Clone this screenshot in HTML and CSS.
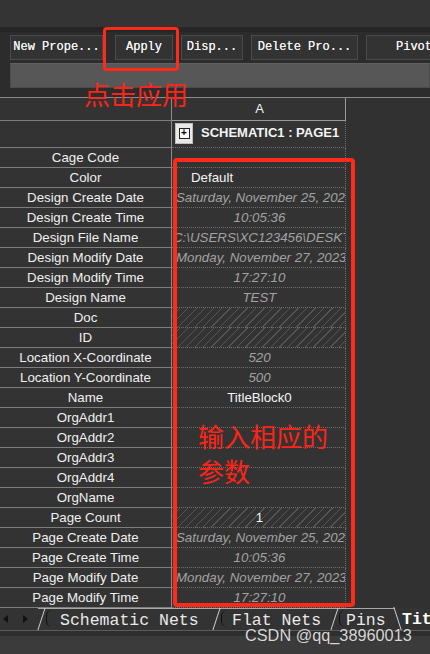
FILE: index.html
```html
<!DOCTYPE html>
<html lang="zh">
<head>
<meta charset="utf-8">
<title>Property Editor</title>
<link rel="stylesheet" href="styles.css">
</head>
<body>
<div class="screen">
  <div class="titlebar"></div>
  <div class="toolarea">
    <div class="toolbar">
      <div class="btn b-new">New Prope...</div>
      <div class="btn b-apply">Apply</div>
      <div class="btn b-disp">Disp...</div>
      <div class="btn b-del">Delete Pro...</div>
      <div class="btn b-pivot">Pivot</div>
    </div>
    <div class="editbar"></div>
  </div>

  <div class="grid">
    <div class="row head">
      <div class="rh"></div>
      <div class="cell colhead">A</div>
      <div class="rest"></div>
    </div>
    <div class="row sch">
      <div class="rh"></div>
      <div class="cell schcell"><span class="plus"><span class="plusin">+</span></span><span class="schname">SCHEMATIC1 : PAGE1</span></div>
      <div class="rest"></div>
    </div>
    <div class="row"><div class="rh">Cage Code</div><div class="cell"></div><div class="rest"></div></div>
    <div class="row"><div class="rh">Color</div><div class="cell val left">Default</div><div class="rest"></div></div>
    <div class="row"><div class="rh">Design Create Date</div><div class="cell ro">Saturday, November 25, 2023</div><div class="rest"></div></div>
    <div class="row"><div class="rh">Design Create Time</div><div class="cell ro">10:05:36</div><div class="rest"></div></div>
    <div class="row"><div class="rh">Design File Name</div><div class="cell ro tight">C:\USERS\XC123456\DESKTOP\TEST.DSN</div><div class="rest"></div></div>
    <div class="row"><div class="rh">Design Modify Date</div><div class="cell ro">Monday, November 27, 2023</div><div class="rest"></div></div>
    <div class="row"><div class="rh">Design Modify Time</div><div class="cell ro">17:27:10</div><div class="rest"></div></div>
    <div class="row"><div class="rh">Design Name</div><div class="cell ro">TEST</div><div class="rest"></div></div>
    <div class="row"><div class="rh">Doc</div><div class="cell hatch"></div><div class="rest"></div></div>
    <div class="row"><div class="rh">ID</div><div class="cell hatch"></div><div class="rest"></div></div>
    <div class="row"><div class="rh">Location X-Coordinate</div><div class="cell ro">520</div><div class="rest"></div></div>
    <div class="row"><div class="rh">Location Y-Coordinate</div><div class="cell ro">500</div><div class="rest"></div></div>
    <div class="row"><div class="rh">Name</div><div class="cell val">TitleBlock0</div><div class="rest"></div></div>
    <div class="row"><div class="rh">OrgAddr1</div><div class="cell"></div><div class="rest"></div></div>
    <div class="row"><div class="rh">OrgAddr2</div><div class="cell"></div><div class="rest"></div></div>
    <div class="row"><div class="rh">OrgAddr3</div><div class="cell"></div><div class="rest"></div></div>
    <div class="row"><div class="rh">OrgAddr4</div><div class="cell"></div><div class="rest"></div></div>
    <div class="row"><div class="rh">OrgName</div><div class="cell"></div><div class="rest"></div></div>
    <div class="row"><div class="rh">Page Count</div><div class="cell hatch val">1</div><div class="rest"></div></div>
    <div class="row"><div class="rh">Page Create Date</div><div class="cell ro">Saturday, November 25, 2023</div><div class="rest"></div></div>
    <div class="row"><div class="rh">Page Create Time</div><div class="cell ro">10:05:36</div><div class="rest"></div></div>
    <div class="row"><div class="rh">Page Modify Date</div><div class="cell ro">Monday, November 27, 2023</div><div class="rest"></div></div>
    <div class="row"><div class="rh">Page Modify Time</div><div class="cell ro">17:27:10</div><div class="rest"></div></div>
  </div>

  <div class="tabbar">
    <div class="navs">
      <svg width="32" height="12" viewBox="0 0 32 12"><path d="M8 2 L3 6 L8 10 Z" fill="#111"/><path d="M23 2 L28 6 L23 10 Z" fill="#111"/></svg>
    </div>
    <div class="tab t1">Schematic Nets</div>
    <div class="tab t2">Flat Nets</div>
    <div class="tab t3">Pins</div>
    <div class="tab active">Title Blocks</div>
  </div>
  <div class="status"></div>

  <div class="mark mark-apply"></div>
  <div class="note note-apply">点击应用</div>
  <div class="mark mark-values"></div>
  <div class="note note-values">输入相应的<br>参数</div>
  <div class="watermark">CSDN @qq_38960013</div>
</div>
</body>
</html>
```
FILE: styles.css
```css
html, body {
  margin: 0;
  padding: 0;
  background: #333333;
}
.screen {
  position: relative;
  width: 430px;
  height: 654px;
  overflow: hidden;
  background: #333333;
  font-family: "Liberation Sans", Arial, sans-serif;
}
.titlebar {
  height: 27px;
  background: #343434;
}
.toolarea {
  box-sizing: border-box;
  height: 70px;
  background: #2c2c2c;
  border-top: 5px solid #262626;
  padding: 3px 0 8px 10px;
}
.toolbar {
  display: flex;
  height: 25px;
  white-space: nowrap;
}
.btn {
  flex: none;
  box-sizing: border-box;
  height: 25px;
  background: #333333;
  border: 1px solid #4a4a4a;
  color: #f2f2f2;
  font-family: "Liberation Mono", "Courier New", monospace;
  font-size: 12px;
  font-weight: normal;
  text-shadow: 0 0 0.4px #ffffff;
  line-height: 23px;
  text-align: center;
  overflow: hidden;
}
.b-new { width: 93px; }
.b-apply { width: 58px; margin-left: 12px; }
.b-disp { width: 62px; margin-left: 8px; }
.b-del { width: 107px; margin-left: 8px; }
.b-pivot { width: 96px; margin-left: 8px; }
.editbar {
  margin-top: 3px;
  height: 25px;
  box-sizing: border-box;
  background: #575757;
  border: 1px solid #4b4b4b;
  border-top-color: #606060;
}

.grid {
  border-top: 1px solid #8a8a8a;
}
.row {
  display: flex;
  height: 20px;
}
.rh {
  flex: none;
  width: 172px;
  box-sizing: border-box;
  border-bottom: 1px solid #7e7e7e;
  border-right: 1px solid #8c8c8c;
  color: #f0f0f0;
  font-size: 13.3px;
  line-height: 20px;
  text-align: center;
  white-space: nowrap;
  overflow: hidden;
}
.cell {
  flex: none;
  width: 174px;
  box-sizing: border-box;
  border-bottom: 1px dotted #6e6e6e;
  border-right: 1px dotted #6e6e6e;
  font-size: 13.3px;
  line-height: 20px;
  text-align: center;
  white-space: nowrap;
  overflow: hidden;
  padding: 0 2px 0 4px;
}
.rest {
  flex: 1;
  background: #313131;
}
.head {
  height: 23px;
}
.head .rh {
  line-height: 22px;
}
.colhead {
  color: #f2f2f2;
  font-size: 13px;
  line-height: 22px;
  border-bottom: 1px solid #9a9a9a;
  border-right: 1px solid #9a9a9a;
}
.sch {
  height: 27px;
}
.schcell {
  display: flex;
  align-items: flex-start;
  text-align: left;
  padding: 2px 0 0 3px;
  line-height: normal;
}
.plus {
  flex: none;
  width: 18px;
  height: 21px;
  box-sizing: border-box;
  background: #e9e9e9;
  border: 1px solid #bdbdbd;
  display: flex;
  align-items: center;
  justify-content: center;
}
.plusin {
  width: 9px;
  height: 9px;
  border: 1px solid #222;
  background: #fafafa;
  color: #000;
  font-size: 10px;
  font-weight: bold;
  line-height: 8px;
  text-align: center;
}
.schname {
  margin-left: 8px;
  margin-top: 2px;
  color: #f4f4f4;
  font-weight: bold;
  font-size: 13px;
}
.val {
  color: #f4f4f4;
}
.left {
  text-align: left;
  padding-left: 19px;
}
.ro {
  color: #a2a2a2;
  font-style: italic;
}
.tight {
  padding-left: 1px;
}
.hatch {
  background: repeating-linear-gradient(135deg, #333333 0 5px, #555555 5px 6px);
}

.tabbar {
  display: flex;
  align-items: stretch;
  height: 22px;
  background: #333333;
  border-bottom: 1px solid #5c5c5c;
  white-space: nowrap;
}
.navs {
  flex: none;
  width: 38px;
  display: flex;
  align-items: center;
}
.tab {
  position: relative;
  flex: none;
  box-sizing: border-box;
  height: 22px;
  border-top: 1px solid #a8a8a8;
  color: #e9e9e9;
  font-family: "Liberation Mono", "Courier New", monospace;
  font-size: 16.5px;
  line-height: 24px;
}
.tab::before {
  content: "";
  position: absolute;
  left: 3px;
  top: -1px;
  bottom: 0;
  width: 1px;
  background: #d0d0d0;
  transform: skewX(-18deg);
}
.tab::after {
  content: "";
  position: absolute;
  left: 8px;
  top: 1px;
  bottom: 3px;
  width: 5px;
  border-left: 1px solid #111111;
  border-radius: 6px 0 0 6px;
}
.t1 { width: 175px; padding-left: 22px; }
.t2 { width: 118px; padding-left: 19px; }
.t3 { width: 64px; padding-left: 15px; }
.active {
  padding-left: 7px;
  border-top: none;
  color: #ffffff;
  font-weight: bold;
}
.active::before {
  left: 2px;
  transform: skewX(18deg);
}
.active::after {
  display: none;
}
.status {
  height: 23px;
  background: #3b3b3b;
  border-top: 5px solid #2e2e2e;
}

.mark {
  position: absolute;
  border: 3px solid #ff2a1a;
  border-radius: 4px;
  box-sizing: border-box;
}
.mark-apply {
  left: 103px;
  top: 27px;
  width: 76px;
  height: 44px;
}
.mark-values {
  left: 173px;
  top: 158px;
  width: 182px;
  height: 449px;
  border-width: 4px;
}
.note {
  position: absolute;
  color: #ff2418;
  font-family: "Noto Sans CJK SC", "Noto Sans", sans-serif;
  font-weight: 400;
  font-size: 26px;
  line-height: 34px;
}
.note-apply {
  left: 84px;
  top: 77px;
}
.note-values {
  left: 198px;
  top: 418px;
  line-height: 35px;
}
.watermark {
  position: absolute;
  left: 245px;
  top: 626px;
  color: #d8d8d8;
  font-size: 16.3px;
  text-shadow: 0 0 1px #222;
}
```
